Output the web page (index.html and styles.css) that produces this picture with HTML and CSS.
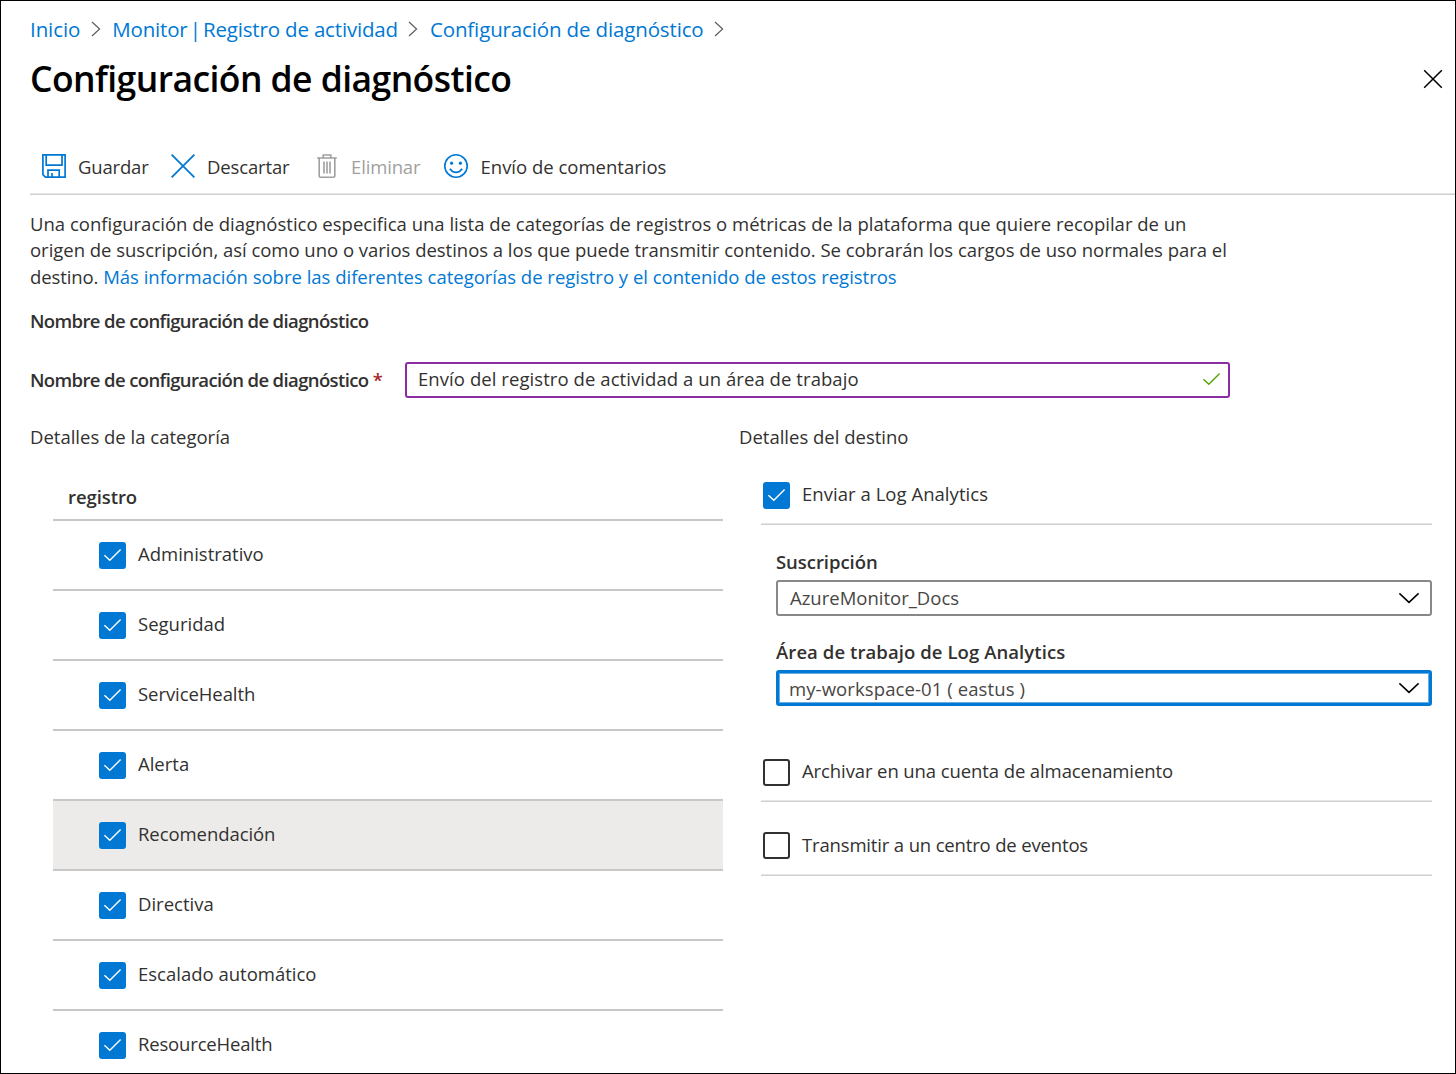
FILE: index.html
```html
<!DOCTYPE html>
<html lang="es">
<head>
<meta charset="utf-8">
<title>Configuración de diagnóstico</title>
<link rel="stylesheet" href="styles.css">
</head>
<body>
<svg class="defs" aria-hidden="true">
  <symbol id="check" viewBox="0 0 27 27"><path d="M5.4 13.2 L10.8 18.3 L21.6 7.6" fill="none" stroke="currentColor" stroke-width="1.4"/></symbol>
  <symbol id="crumb" viewBox="0 0 10 16"><path d="M1 1 L8.6 8 L1 15" fill="none" stroke="currentColor" stroke-width="1.2"/></symbol>
  <symbol id="down" viewBox="0 0 22 12"><path d="M1.4 1.4 L11 10.4 L20.6 1.4" fill="none" stroke="currentColor" stroke-width="1.5"/></symbol>
</svg>
<div class="blade">
  <nav class="crumbs">
    <a class="crumb" href="#">Inicio</a><svg class="sep"><use href="#crumb"/></svg>
    <a class="crumb crumb-monitor" href="#">Monitor<span class="pipe"> | </span>Registro de actividad</a><svg class="sep"><use href="#crumb"/></svg>
    <a class="crumb crumb-diag" href="#">Configuración de diagnóstico</a><svg class="sep"><use href="#crumb"/></svg>
  </nav>
  <header class="head">
    <h1 class="title">Configuración de diagnóstico</h1>
    <svg class="close" viewBox="0 0 20 20"><path d="M1.2 1.2 L18.8 18.8 M18.8 1.2 L1.2 18.8" stroke="#000" stroke-width="1.5"/></svg>
  </header>
  <div class="toolbar">
    <div class="cmd save">
      <svg class="ico" viewBox="0 0 24 24" fill="none" stroke="#0078d4" stroke-width="1.7"><path d="M0.9 0.9 H23.1 V23.1 H3.4 L0.9 20.6 Z M4.2 1 V11.2 H20 V1 M6 23 V16.2 H17.2 V23 M10 23 V19"/></svg>
      <span>Guardar</span>
    </div>
    <div class="cmd discard">
      <svg class="ico" viewBox="0 0 24 24" fill="none" stroke="#0078d4" stroke-width="1.8"><path d="M0.6 0.6 L23.4 23.4 M23.4 0.6 L0.6 23.4"/></svg>
      <span>Descartar</span>
    </div>
    <div class="cmd delete">
      <svg class="ico" viewBox="0 0 24 24" fill="none" stroke="#a19f9d" stroke-width="1.6"><path d="M2.2 4 H21.8 M8.2 4 V1 H15.8 V4 M4.2 4 V22 Q4.2 23.2 5.4 23.2 H18.6 Q19.8 23.2 19.8 22 V4 M9 7.5 V19.4 M12 7.5 V19.4 M15 7.5 V19.4"/></svg>
      <span>Eliminar</span>
    </div>
    <div class="cmd feedback">
      <svg class="ico" viewBox="0 0 24 24" fill="none" stroke="#0078d4" stroke-width="1.6"><circle cx="12" cy="12" r="11.2"/><path d="M5.8 14.8 Q8.4 18.4 12 18.4 T18.2 14.8"/><g fill="#0078d4" stroke="none"><circle cx="7.6" cy="9.2" r="1.6"/><circle cx="16.4" cy="9.2" r="1.6"/></g></svg>
      <span>Envío de comentarios</span>
    </div>
  </div>
  <hr class="rule">
  <p class="desc">
    <span class="line">Una configuración de diagnóstico especifica una lista de categorías de registros o métricas de la plataforma que quiere recopilar de un</span><br>
    <span class="line second">origen de suscripción, así como uno o varios destinos a los que puede transmitir contenido. Se cobrarán los cargos de uso normales para el</span><br>
    <span class="line third">destino.</span> <a class="more" href="#">Más información sobre las diferentes categorías de registro y el contenido de estos registros</a>
  </p>
  <h2 class="name-head">Nombre de configuración de diagnóstico</h2>
  <div class="name-row">
    <label class="name-label">Nombre de configuración de diagnóstico <b class="req">*</b></label>
    <div class="name-input"><span>Envío del registro de actividad a un área de trabajo</span><svg class="valid"><use href="#check"/></svg></div>
  </div>
  <div class="cols">
    <section class="left">
      <h3 class="sub">Detalles de la categoría</h3>
      <div class="logs">
        <div class="logs-head">registro</div>
        <div class="log"><svg class="box on"><use href="#check"/></svg><span>Administrativo</span></div>
        <div class="log"><svg class="box on"><use href="#check"/></svg><span>Seguridad</span></div>
        <div class="log tight"><svg class="box on"><use href="#check"/></svg><span>ServiceHealth</span></div>
        <div class="log"><svg class="box on"><use href="#check"/></svg><span>Alerta</span></div>
        <div class="log tight hover"><svg class="box on"><use href="#check"/></svg><span>Recomendación</span></div>
        <div class="log"><svg class="box on"><use href="#check"/></svg><span>Directiva</span></div>
        <div class="log"><svg class="box on"><use href="#check"/></svg><span>Escalado automático</span></div>
        <div class="log tighter"><svg class="box on"><use href="#check"/></svg><span>ResourceHealth</span></div>
      </div>
    </section>
    <section class="right">
      <h3 class="sub">Detalles del destino</h3>
      <div class="dest">
        <div class="opt analytics"><svg class="box on"><use href="#check"/></svg><span>Enviar a Log Analytics</span></div>
        <hr class="rule">
        <div class="fields">
          <label class="flabel sub-label">Suscripción</label>
          <div class="select plain"><span>AzureMonitor_Docs</span><svg class="chev"><use href="#down"/></svg></div>
          <label class="flabel ws-label">Área de trabajo de Log Analytics</label>
          <div class="select focus"><span>my-workspace-01 ( eastus )</span><svg class="chev"><use href="#down"/></svg></div>
        </div>
        <div class="opt archive"><i class="box"></i><span>Archivar en una cuenta de almacenamiento</span></div>
        <hr class="rule">
        <div class="opt stream"><i class="box"></i><span>Transmitir a un centro de eventos</span></div>
        <hr class="rule">
      </div>
    </section>
  </div>
</div>
</body>
</html>
```
FILE: styles.css
```css
* { box-sizing: border-box; }
body { margin: 0; background: #fff; font-family: "Open Sans", "Noto Sans", sans-serif; font-size: 18.5px; color: #323130; }
.defs { display: none; }
.blade { width: 1456px; height: 1074px; border: 1px solid #000; overflow: hidden; }
span, a { white-space: nowrap; }
a { color: #0078d4; text-decoration: none; }
h1, h2, h3, p { margin: 0; }

/* Breadcrumb and title */
.crumbs { display: flex; align-items: center; height: 56px; padding-left: 29px; font-size: 20.5px; }
.crumb { letter-spacing: -0.1px; }
.crumb-monitor { letter-spacing: -0.17px; }
.crumb-diag { letter-spacing: -0.14px; }
.pipe { word-spacing: -3px; }
.sep { width: 10px; height: 16px; margin: 0 11.5px 0 10.5px; color: #605e5c; }
.head { display: flex; justify-content: space-between; align-items: center; height: 44px; padding: 0 12px 0 29px; }
.title { font-size: 35.5px; font-weight: 600; line-height: 42px; padding-bottom: 2px; color: #000; letter-spacing: -0.57px; }
.close { width: 20px; height: 20px; }

/* Command bar */
.toolbar { display: flex; height: 92px; padding: 39px 0 0 41px; }
.cmd { display: flex; align-items: center; height: 52px; }
.ico { width: 24px; height: 24px; margin-right: 12px; }
.cmd.save { width: 129px; letter-spacing: -0.18px; }
.cmd.discard { width: 144px; letter-spacing: -0.14px; }
.cmd.delete { width: 129px; color: #a19f9d; letter-spacing: -0.15px; }
.cmd.feedback .ico { margin-right: 12.5px; }
.rule { height: 2px; margin: 0 0 0 29px; border: 0; border-top: 1px solid #e6e6e6; border-bottom: 1px solid #d0d0d0; }

/* Description and name field */
.desc { padding: 16px 0 0 29px; line-height: 26.4px; height: 112px; }
.second { letter-spacing: -0.022px; }
.third { letter-spacing: -0.1px; }
.more { letter-spacing: -0.01px; }
.name-head { padding-left: 29px; height: 27px; line-height: 27px; font-size: 18.5px; font-weight: 600; letter-spacing: -0.62px; }
.name-row { display: flex; margin: 28px 0 0 29px; height: 36px; }
.name-label { width: 375px; line-height: 36px; font-weight: 600; letter-spacing: -0.62px; white-space: nowrap; }
.req { color: #a4262c; font-weight: 600; }
.name-input { display: flex; justify-content: space-between; width: 825px; height: 36px; padding: 0 3px 0 11px; border: 2px solid #8a2da5; border-radius: 3px; line-height: 29px; letter-spacing: 0.07px; }
.valid { width: 27px; height: 27px; margin-top: 2px; color: #57a300; }

/* Two columns */
.cols { display: flex; padding: 25px 0 0 29px; }
.left { width: 709px; }
.right { width: 693px; }
.sub { height: 28px; line-height: 28px; font-size: 18.5px; font-weight: 400; }
.logs { width: 670px; margin: 24px 0 0 23px; }
.logs-head { height: 44px; padding-left: 15px; line-height: 44px; font-weight: 600; letter-spacing: -0.08px; }
.log { display: flex; height: 70px; padding: 21px 0 0 46px; border-top: 2px solid #c8c8c8; line-height: 23px; }
.tight { letter-spacing: -0.07px; }
.tighter { letter-spacing: -0.17px; }
.hover { background: #edebe9; }
.box { flex: none; width: 27px; height: 27px; margin-right: 12px; border: 2px solid #323130; border-radius: 3px; }
.box.on { border: 0; background: #0078d4; color: #fff; }
.dest { margin-left: 22px; }
.dest .rule { margin: 0; width: 671px; }
.opt { display: flex; padding-left: 2px; line-height: 23px; }
.analytics { height: 72px; padding-top: 31px; letter-spacing: 0.04px; }
.fields { width: 656px; margin-left: 15px; height: 234px; }
.flabel { display: block; font-weight: 600; }
.sub-label { height: 55px; padding-top: 24px; line-height: 25px; letter-spacing: -0.05px; }
.ws-label { height: 54px; padding-top: 23px; line-height: 25px; letter-spacing: 0.08px; }
.select { display: flex; justify-content: space-between; align-items: center; height: 36px; padding: 0 10px 0 12px; border: 2px solid #8a8886; border-radius: 3px; color: #484644; }
.select.plain span { margin-bottom: 2px; }
.select.focus { padding: 0 9px 0 10px; border: 3px solid #0078d4; box-shadow: inset 0 0 0 1px #66afe5; letter-spacing: 0.1px; }
.chev { width: 22px; height: 12px; color: #000; }
.archive { height: 41px; letter-spacing: -0.1px; }
.stream { height: 72px; padding-top: 30px; line-height: 25px; letter-spacing: -0.16px; }
```
